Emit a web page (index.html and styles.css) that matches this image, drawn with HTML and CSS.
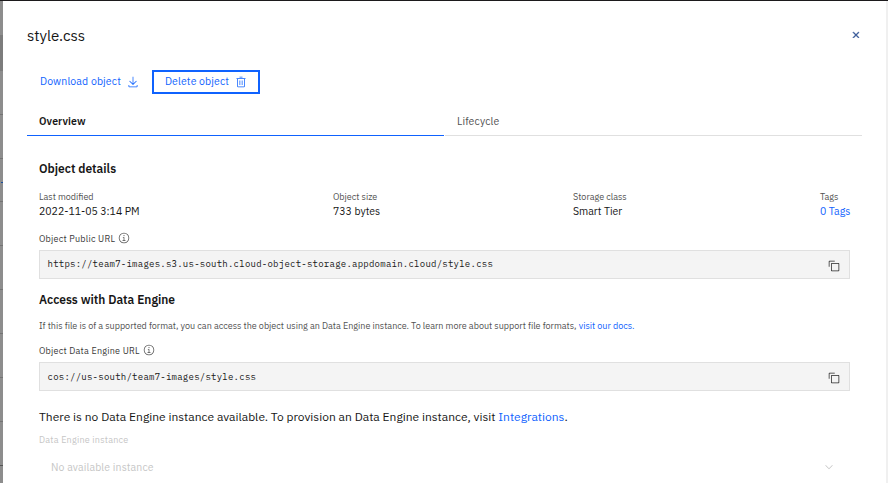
FILE: index.html
```html
<!DOCTYPE html>
<html lang="en">
<head>
<meta charset="utf-8">
<title>style.css</title>
<link rel="stylesheet" href="styles.css">
</head>
<body>
<svg class="defs" width="0" height="0">
  <symbol id="copy" viewBox="0 0 32 32"><path d="M28 10v18H10V10h18m0-2H10a2 2 0 0 0-2 2v18a2 2 0 0 0 2 2h18a2 2 0 0 0 2-2V10a2 2 0 0 0-2-2z"/><path d="M4 18H2V4a2 2 0 0 1 2-2h14v2H4z"/></symbol>
  <symbol id="info" viewBox="0 0 32 32"><path d="M17 22v-8h-4v2h2v6h-3v2h8v-2zM16 8a1.5 1.5 0 1 0 1.5 1.5A1.5 1.5 0 0 0 16 8z"/><path d="M16 30a14 14 0 1 1 14-14 14 14 0 0 1-14 14zm0-26a12 12 0 1 0 12 12A12 12 0 0 0 16 4z"/></symbol>
</svg>
<div class="page">
  <div class="backdrop"><i class="band"></i><i class="r r1"></i><i class="r r2"></i><i class="r link"></i><i class="r r3"></i><i class="r r4"></i><i class="r r4"></i><i class="r r4"></i><i class="r r4"></i><i class="r r4"></i><i class="r r4 strong"></i></div>
  <main class="panel">
    <header class="head">
      <h1>style.css</h1>
      <svg class="close" width="12" height="12" viewBox="0 0 32 32"><path d="M24 9.400L22.600 8 16 14.600 9.400 8 8 9.400l6.600 6.600L8 22.600 9.400 24l6.600-6.600 6.600 6.600 1.400-1.400-6.600-6.600L24 9.400z"/></svg>
    </header>
    <div class="actions">
      <a class="btn"><span>Download object</span><svg width="12" height="12" viewBox="0 0 32 32"><path d="M26 24v4H6v-4H4v4a2 2 0 0 0 2 2h20a2 2 0 0 0 2-2v-4zM26 14l-1.410-1.410L17 20.170V2h-2v18.170l-7.590-7.580L6 14l10 10z"/></svg></a>
      <a class="btn focus"><span>Delete object</span><svg width="12" height="12" viewBox="0 0 32 32"><path d="M12 12h2v12h-2zM18 12h2v12h-2z"/><path d="M4 6v2h2v20a2 2 0 0 0 2 2h16a2 2 0 0 0 2-2V8h2V6zm4 22V8h16v20zM12 2h8v2h-8z"/></svg></a>
    </div>
    <nav class="tabs">
      <a class="tab active">Overview</a>
      <a class="tab">Lifecycle</a>
    </nav>
    <section class="body">
      <h2>Object details</h2>
      <dl class="facts">
        <div><dt>Last modified</dt><dd>2022-11-05 3:14 PM</dd></div>
        <div><dt>Object size</dt><dd>733 bytes</dd></div>
        <div><dt>Storage class</dt><dd>Smart Tier</dd></div>
        <div><dt>Tags</dt><dd><a>0 Tags</a></dd></div>
      </dl>
      <div class="label"><span>Object Public URL</span><svg width="12" height="12"><use href="#info"/></svg></div>
      <div class="snippet public"><code>https://team7-images.s3.us-south.cloud-object-storage.appdomain.cloud/style.css</code><svg width="12" height="12"><use href="#copy"/></svg></div>
      <h2 class="h-access">Access with Data Engine</h2>
      <p class="help">If this file is of a supported format, you can access the object using an Data Engine instance. To learn more about support file formats, <a>visit our docs.</a></p>
      <div class="label engine"><span>Object Data Engine URL</span><svg width="12" height="12"><use href="#info"/></svg></div>
      <div class="snippet"><code>cos://us-south/team7-images/style.css</code><svg width="12" height="12"><use href="#copy"/></svg></div>
      <p class="notice">There is no Data Engine instance available. To provision an Data Engine instance, visit <a>Integrations</a>.</p>
      <div class="field-label">Data Engine instance</div>
      <div class="select"><span>No available instance</span><svg width="12" height="12" viewBox="0 0 16 16"><path d="M8 11L3 6l.7-.7L8 9.600l4.300-4.300.7.700z"/></svg></div>
    </section>
  </main>
</div>
</body>
</html>
```
FILE: styles.css
```css
* { box-sizing: border-box; }
body { margin: 0; overflow: hidden; background: #fff; color: #161616; font-family: "IBM Plex Sans", Roboto, "Liberation Sans", sans-serif; font-size: 10.5px; }
h1, h2, p, dl, dd { margin: 0; }
svg { flex: none; fill: currentColor; }
a { color: #0f62fe; }
h1, h2, p, dt, dd, span, a { white-space: nowrap; }
.defs { position: absolute; }
.page { display: flex; height: 483px; border-top: 1px solid #1c1a1c; }
.backdrop { width: 3px; flex: none; background: #8d8d8d; }
.band { display: block; height: 36px; margin-top: 34px; background: #7c7c7c; }
.r { display: block; height: 1px; background: #747474; }
.r1 { margin-top: 43px; }
.r2 { margin-top: 43px; }
.link { margin-top: 23px; margin-left: 1px; background: #1b4f9c; }
.r3 { margin-top: 18px; }
.r4 { margin-top: 43px; }
.strong { background: #555; }
.panel { flex: 1; min-width: 0; padding: 0 24px; border-right: 2px solid #f0f0f0; }
.head { display: flex; justify-content: space-between; height: 69px; padding-top: 24px; }
h1 { font-size: 15px; font-weight: 400; line-height: 22px; }
.close { margin: 4px 0 0; color: #274b8f; stroke: currentColor; stroke-width: 1.5; }
.actions { display: flex; height: 24px; padding-left: 1px; }
.btn { display: flex; align-items: center; padding: 0 12px; letter-spacing: .12px; }
.btn span { margin-top: -2px; }
.btn svg { margin-left: 6px; }
.focus { width: 108px; margin-left: 1px; padding: 0 11px; border: 2px solid #0f62fe; }
.tabs { display: grid; grid-template-columns: 417px 417px; gap: 1px; height: 41px; margin-top: 1px; }
.tab { padding: 18px 12px 0; line-height: 16px; letter-spacing: .12px; color: #525252; border-bottom: 1px solid #e0e0e0; }
.active { color: #161616; font-weight: 600; border-color: #0f62fe; }
.body { padding: 24px 12px 0; }
h2 { font-size: 12px; font-weight: 600; line-height: 18px; }
.facts { display: grid; grid-template-columns: 294px 240px 247px 30px; margin-top: 12px; }
dt { font-size: 9px; line-height: 14px; color: #525252; }
dd { line-height: 14px; margin-bottom: 1px; }
.label { display: flex; align-items: center; height: 14px; margin-top: 12px; font-size: 9px; letter-spacing: .24px; color: #393939; }
.label svg { margin-left: 3px; color: #525252; }
.snippet { display: flex; align-items: center; justify-content: space-between; width: 811px; height: 29px; margin-top: 5px; padding: 0 9px 0 7.5px; background: #f4f4f4; border: 1px solid #e0e0e0; }
.snippet svg { margin-top: 3px; color: #262626; }
code { margin-top: -1px; font-family: "IBM Plex Mono", "Liberation Mono", monospace; font-size: 9px; letter-spacing: .24px; color: #161616; }
.public code { margin-top: -3px; }
.h-access { margin-top: 12px; }
.help { margin-top: 10px; font-size: 9px; line-height: 14px; letter-spacing: .005px; color: #525252; }
.label.engine { margin-top: 10px; }
.notice { margin-top: 17px; font-size: 12px; line-height: 18px; letter-spacing: .005px; }
.field-label { margin-top: 7px; font-size: 9px; line-height: 14px; letter-spacing: .24px; color: #c6c6c6; }
.select { display: flex; justify-content: space-between; align-items: center; width: 811px; height: 39px; padding: 0 15px 0 12px; letter-spacing: .12px; color: #c6c6c6; }
```
